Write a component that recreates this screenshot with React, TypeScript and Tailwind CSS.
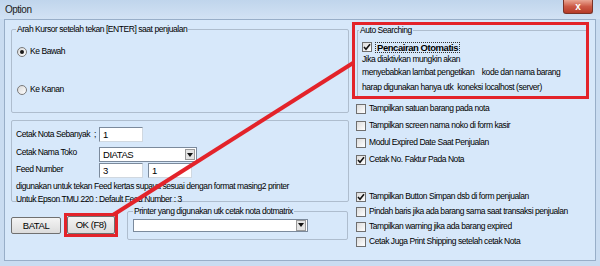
import React from "react";

const Check = ({ checked }: { checked?: boolean }) => (
  <span className="w-[10px] h-[10px] border border-[#6f6f6f] bg-gradient-to-br from-[#dcdcdc] to-white flex items-center justify-center shrink-0">
    {checked && (
      <svg width="8" height="8" viewBox="0 0 8 8">
        <path d="M1 4 L3 6.2 L7 1.2" stroke="#111" strokeWidth="1.6" fill="none" />
      </svg>
    )}
  </span>
);

const Radio = ({ checked }: { checked?: boolean }) => (
  <span className="w-[10px] h-[10px] rounded-full border border-[#7a7a7a] bg-gradient-to-br from-[#d8d8d8] to-white flex items-center justify-center shrink-0">
    {checked && <span className="w-[4px] h-[4px] rounded-full bg-[#1a1a1a]" />}
  </span>
);

const TextBox = ({ value, w }: { value: string; w: string }) => (
  <div className={`${w} h-[15px] bg-white border border-[#7b8a9c] border-b-[#d0d8e0] border-r-[#d0d8e0] flex items-center pl-[3px] text-[9.5px]`}>
    {value}
  </div>
);

const Combo = ({ value, w, h }: { value: string; w: string; h: string }) => (
  <div className={`${w} ${h} bg-white border border-[#7b8a9c] flex items-center justify-between pl-[3px] pr-[1px] text-[9.5px]`}>
    <span>{value}</span>
    <span className="w-[10px] h-[11px] bg-[#e4e4e4] border border-[#9a9a9a] flex items-center justify-center">
      <svg width="6" height="4" viewBox="0 0 6 4">
        <path d="M0 0 H6 L3 4 Z" fill="#111" />
      </svg>
    </span>
  </div>
);

const options = [
  { label: "Tampilkan satuan barang pada nota", checked: false },
  { label: "Tampilkan screen nama noko di form kasir", checked: false },
  { label: "Modul Expired Date Saat Penjualan", checked: false },
  { label: "Cetak No. Faktur Pada Nota", checked: true },
];

const moreOptions = [
  { label: "Tampilkan Button Simpan dsb di form penjualan", checked: true },
  { label: "Pindah baris jika ada barang sama saat transaksi penjualan", checked: false },
  { label: "Tampilkan warning jika ada barang expired", checked: false },
  { label: "Cetak Juga Print Shipping setelah cetak Nota", checked: false },
];

export default function App() {
  return (
    <div className="relative w-[600px] h-[266px] overflow-hidden bg-[#c9dcf1] flex flex-col font-['Liberation_Sans',Arial,sans-serif] text-[8.5px] tracking-[-0.45px] leading-none text-black whitespace-nowrap">
      {/* title bar */}
      <div className="h-[19px] shrink-0 flex items-start justify-between pl-[5px] pr-[7px] bg-gradient-to-b from-[#c0d5ec] to-[#d2e2f4]">
        <span className="text-[10px] tracking-[-0.5px] mt-[5px] text-[#1b1b1b]">Option</span>
        <div className="w-[30px] h-[14px] rounded-b-[3px] border border-t-0 border-[#7a3327] bg-gradient-to-b from-[#e9a694] via-[#cc5a46] to-[#b63b28] flex items-center justify-center text-white text-[10px] tracking-normal font-bold">
          x
        </div>
      </div>

      {/* client area */}
      <div className="flex-1 mx-[4px] mb-[5px] border border-[#98aec8] bg-[#d7e8fa] flex pl-[6px]">
        {/* left column */}
        <div className="w-[338px] flex flex-col">
          <fieldset className="mt-[5px] h-[88px] border border-[#aebdce] rounded-[2px] px-[5px]">
            <legend className="ml-[-1px] px-[1px]">Arah Kursor setelah tekan [ENTER] saat penjualan</legend>
            <div className="flex items-center gap-[3px] mt-[13px]">
              <Radio checked />
              <span>Ke Bawah</span>
            </div>
            <div className="flex items-center gap-[3px] mt-[28px]">
              <Radio />
              <span>Ke Kanan</span>
            </div>
          </fieldset>

          <fieldset className="mt-[7px] h-[82px] border border-[#aebdce] rounded-[2px] pl-[4px] pt-[6px]">
            <div className="flex items-center">
              <span className="w-[83px]">Cetak Nota Sebanyak&nbsp;&nbsp;;</span>
              <TextBox value="1" w="w-[44px]" />
            </div>
            <div className="flex items-start mt-[5px]">
              <span className="w-[83px] mt-[1px]">Cetak Nama Toko</span>
              <Combo value="DIATAS" w="w-[98px]" h="h-[15px]" />
            </div>
            <div className="flex items-start mt-[1px]">
              <span className="w-[83px] mt-[2px]">Feed Number</span>
              <div className="flex gap-[5px]">
                <TextBox value="3" w="w-[44px]" />
                <TextBox value="1" w="w-[44px]" />
              </div>
            </div>
            <p className="mt-[4px]">digunakan untuk tekan Feed kertas supaya sesuai dengan format masing2 printer</p>
            <p className="mt-[4px]">Untuk Epson TMU 220 : Default Feed Number : 3</p>
          </fieldset>

          <div className="mt-[5px] flex items-start">
            <button className="mt-[10px] w-[50px] h-[17px] border border-[#707070] rounded-[2px] bg-gradient-to-b from-[#f4f4f4] to-[#dcdcdc] text-[9.5px]">
              BATAL
            </button>
            <div className="ml-[3px] mt-[6px] border-[3px] border-[#e3232a]">
              <button className="w-[48px] h-[18px] border border-[#707070] rounded-[2px] bg-gradient-to-b from-[#f4f4f4] to-[#dcdcdc] text-[9.5px]">
                OK (F8)
              </button>
            </div>
            <fieldset className="ml-[9px] w-[221px] h-[33px] border border-[#aebdce] rounded-[2px] pl-[5px]">
              <legend className="px-[1px]">Printer yang digunakan utk cetak nota dotmatrix</legend>
              <div className="mt-[3px]">
                <Combo value="" w="w-[175px]" h="h-[13px]" />
              </div>
            </fieldset>
          </div>
        </div>

        {/* right column */}
        <div className="ml-[3px] w-[237px] flex flex-col">
          <div className="mt-[2px] h-[77px] border-[3px] border-[#e3232a] pl-[2px] pt-[1px] overflow-hidden">
            <fieldset className="h-[80px] border-l border-t border-[#aebdce] pl-[4px]">
              <legend className="ml-[-3px] px-[1px]">Auto Searching</legend>
              <div className="flex items-center gap-[3px] mt-[7px]">
                <Check checked />
                <span className="font-bold text-[9.5px] border border-dotted border-[#333] px-[1px]">Pencairan Otomatis</span>
              </div>
              <p className="mt-[2px]">Jika diaktivkan mungkin akan</p>
              <p className="mt-[4px] whitespace-pre">menyebabkan lambat pengetikan    kode dan nama barang</p>
              <p className="mt-[7px] whitespace-pre">harap digunakan hanya utk  koneksi localhost (server)</p>
            </fieldset>
          </div>

          <div className="pl-[4px] mt-[1px] flex flex-col">
            {options.map((o) => (
              <div key={o.label} className="h-[17px] flex items-center gap-[3px]">
                <Check checked={o.checked} />
                <span>{o.label}</span>
              </div>
            ))}
            <div className="mt-[21px]" />
            {moreOptions.map((o) => (
              <div key={o.label} className="h-[15px] flex items-center gap-[3px]">
                <Check checked={o.checked} />
                <span>{o.label}</span>
              </div>
            ))}
          </div>
        </div>
      </div>

      {/* annotation arrow line */}
      <svg className="absolute inset-0 pointer-events-none" width="600" height="266">
        <line x1="113" y1="215" x2="353" y2="63" stroke="#e3232a" strokeWidth="4" />
      </svg>
    </div>
  );
}
